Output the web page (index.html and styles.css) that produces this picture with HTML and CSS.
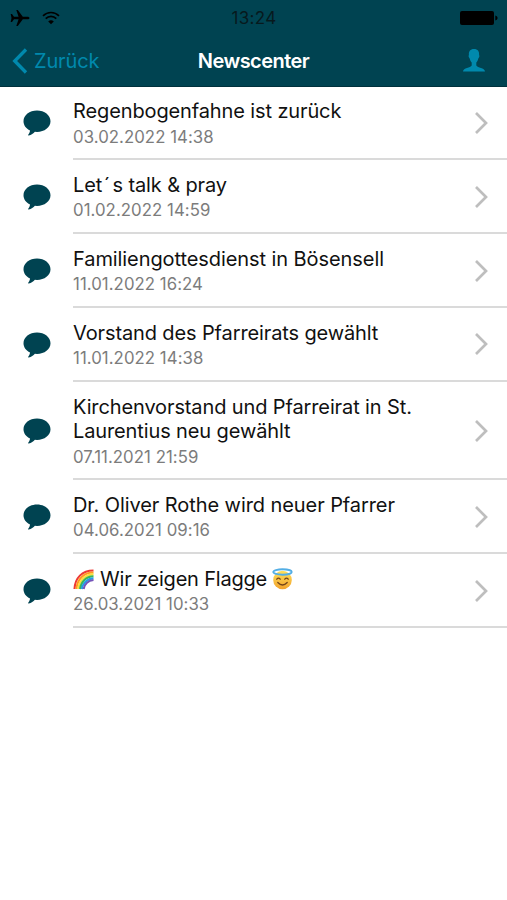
FILE: index.html
```html
<!DOCTYPE html>
<html lang="de">
<head>
<meta charset="utf-8">
<title>Newscenter</title>
<link rel="stylesheet" href="styles.css">
</head>
<body>
<svg class="defs" aria-hidden="true">
  <symbol id="bubble" viewBox="0 0 28 26"><path d="M14 .5C6.500.5.5 5.200.5 11.200c0 4 2.600 7.300 6.500 9.200-.2 1.700-.7 3-1.800 4.400-.3.500 0 .8.500.7 2.700-.5 4.700-1.900 6.200-3.700l2.100.1c7.500 0 13.500-4.700 13.500-10.700S21.500.5 14 .5Z" fill="#004351"/></symbol>
  <symbol id="chevron" viewBox="0 0 14 24"><path d="m2 2 10 10L2 22" fill="none" stroke="#bebebe" stroke-width="2.700"/></symbol>
</svg>
<header class="header">
  <div class="status">
    <div class="signals">
      <svg width="20" height="18" viewBox="0 0 20 18"><path d="M.7 5h1.300l2 2.700h4.600L6.300 1h1.500l5 6.700h4.700c1.200 0 2 .6 2 1.300s-.8 1.300-2 1.300h-4.700l-5 6.700H6.300l2.300-6.700H4L2 13H.7l.8-4Z"/></svg>
      <svg width="18" height="14" viewBox="0 0 18 14"><path d="M1 4.800c4.600-4.400 11.400-4.400 16 0M3.700 7.700c3-3 7.600-3 10.600 0" fill="none" stroke="#000" stroke-width="1.700"/><path d="M6.200 10.400c1.700-1.500 3.900-1.500 5.600 0L9 13.300Z"/></svg>
    </div>
    <span class="time">13:24</span>
    <svg class="battery" width="38" height="14" viewBox="0 0 38 14"><rect width="34" height="14" rx="2"/><path d="M35.300 4.500c3 .7 3 4.300 0 5Z"/></svg>
  </div>
  <nav class="nav">
    <a class="back"><svg width="16" height="26" viewBox="0 0 16 26"><path d="M14 1.500 2.700 13 14 24.500" fill="none" stroke="#0089ad" stroke-width="3.300"/></svg><span>Zurück</span></a>
    <h1>Newscenter</h1>
    <svg class="user" width="22" height="23" viewBox="0 0 22 23"><path d="M11 0C7.200 0 5.700 2.200 5.900 5.800c0 .6-.5 1-.2 2 .2.900.8 1.300 1 1.700.4 1.900 1 3 2 3.900v3.100C7.500 18.800.3 18.800 0 22.500h22c-.3-3.700-7.500-3.700-8.700-6v-3.100c1-.9 1.600-2 2-3.900.2-.4.8-.8 1-1.700.3-1-.2-1.400-.2-2C16.300 2.200 14.800 0 11 0Z" fill="#0089ad"/></svg>
  </nav>
</header>
<main class="list">
  <article class="row"><svg class="bubble"><use href="#bubble"/></svg><div class="body"><div class="text"><h2>Regenbogenfahne ist zurück</h2><time>03.02.2022 14:38</time></div><svg class="chevron"><use href="#chevron"/></svg></div></article>
  <article class="row"><svg class="bubble"><use href="#bubble"/></svg><div class="body"><div class="text"><h2>Let<span class="accent">´</span>s talk &amp; pray</h2><time>01.02.2022 14:59</time></div><svg class="chevron"><use href="#chevron"/></svg></div></article>
  <article class="row"><svg class="bubble"><use href="#bubble"/></svg><div class="body"><div class="text"><h2 class="loose">Familiengottesdienst in Bösensell</h2><time>11.01.2022 16:24</time></div><svg class="chevron"><use href="#chevron"/></svg></div></article>
  <article class="row"><svg class="bubble"><use href="#bubble"/></svg><div class="body"><div class="text"><h2>Vorstand des Pfarreirats gewählt</h2><time>11.01.2022 14:38</time></div><svg class="chevron"><use href="#chevron"/></svg></div></article>
  <article class="row"><svg class="bubble"><use href="#bubble"/></svg><div class="body"><div class="text"><h2>Kirchenvorstand und Pfarreirat in St.<br>Laurentius neu gewählt</h2><time>07.11.2021 21:59</time></div><svg class="chevron"><use href="#chevron"/></svg></div></article>
  <article class="row"><svg class="bubble"><use href="#bubble"/></svg><div class="body"><div class="text"><h2 class="loose">Dr. Oliver Rothe wird neuer Pfarrer</h2><time>04.06.2021 09:16</time></div><svg class="chevron"><use href="#chevron"/></svg></div></article>
  <article class="row"><svg class="bubble"><use href="#bubble"/></svg><div class="body"><div class="text"><h2 class="emoji-title">
    <svg width="22" height="21" viewBox="0 0 22 21" fill="none" stroke-width="2.100"><path d="M1.500 20C2 9 9 1.500 20.500 1.500" stroke="#ed3a35"/><path d="M3.500 20C4 10.500 10.500 3.500 20.500 3.500" stroke="#ff9b21"/><path d="M5.300 20C6 12 12 5.500 20.500 5.400" stroke="#f9df3c"/><path d="M7 20C8 13 13 7.500 20.500 7.300" stroke="#38b65a"/><path d="M8.800 20C9.500 14.500 14 9.500 20.500 9.200" stroke="#259ce8"/><path d="M10.600 20C11.500 15.500 15 11.500 20.500 11" stroke="#7454b8"/></svg>
    <span>Wir zeigen Flagge</span>
    <svg width="21" height="22" viewBox="0 0 21 22"><defs><linearGradient id="face" x2="0" y2="1"><stop stop-color="#ffe15a"/><stop offset="1" stop-color="#f2a22d"/></linearGradient></defs><circle cx="10.500" cy="12" r="9.300" fill="url(#face)"/><ellipse cx="10.500" cy="4" rx="9.200" ry="2.700" fill="none" stroke="#53aee5" stroke-width="1.900"/><path d="M4.800 11.200q1.700-2.300 3.400 0m4.600 0q1.700-2.300 3.400 0M5.800 14.500q4.700 5 9.400 0" fill="none" stroke="#75451a" stroke-width="1.300" stroke-linecap="round"/></svg>
  </h2><time>26.03.2021 10:33</time></div><svg class="chevron"><use href="#chevron"/></svg></div></article>
</main>
</body>
</html>
```
FILE: styles.css
```css
* { box-sizing: border-box; }
body { margin: 0; min-height: 900px; background: #fff; color: #111; font-family: Inter, "Liberation Sans", sans-serif; }
h1, h2 { margin: 0; }
svg { display: block; flex: none; }
.defs { position: absolute; width: 0; height: 0; }
.header { height: 87px; background: #004351; border-bottom: 1px solid #00313c; }
.status { display: grid; grid-template-columns: 1fr auto 1fr; align-items: center; height: 35px; padding: 0 9px 0 10px; }
.signals { display: flex; align-items: center; gap: 12px; }
.time { font-size: 17px; letter-spacing: .35px; color: #07191d; }
.battery { justify-self: end; }
.nav { display: grid; grid-template-columns: 1fr auto 1fr; align-items: center; height: 51px; padding: 0 22px; }
.back { display: flex; align-items: center; gap: 6px; margin-left: -10px; color: #0089ad; font-size: 20px; letter-spacing: -.15px; }
.nav h1 { color: #fff; font-size: 20px; font-weight: 600; letter-spacing: -.55px; }
.user { justify-self: end; }
.list { margin-top: -1px; }
.row { display: grid; grid-template-columns: 73px 1fr; align-items: center; }
.bubble { width: 28px; height: 26px; margin-left: 23px; }
.body { display: flex; align-items: center; justify-content: space-between; padding: 13px 19px 11.400px 0; border-bottom: 2px solid #dadada; }
.text { white-space: nowrap; }
.chevron { width: 14px; height: 24px; }
h2 { font-size: 20px; line-height: 24.500px; font-weight: 400; letter-spacing: -.12px; }
h2.loose { letter-spacing: -.08px; }
.accent { padding: 0 2.500px 0 1.500px; }
time { display: block; margin-top: 3px; font-size: 16.800px; line-height: 20px; letter-spacing: .05px; color: #7c7c7c; }
.emoji-title { display: flex; align-items: center; gap: 5px; letter-spacing: -.2px; }
```
